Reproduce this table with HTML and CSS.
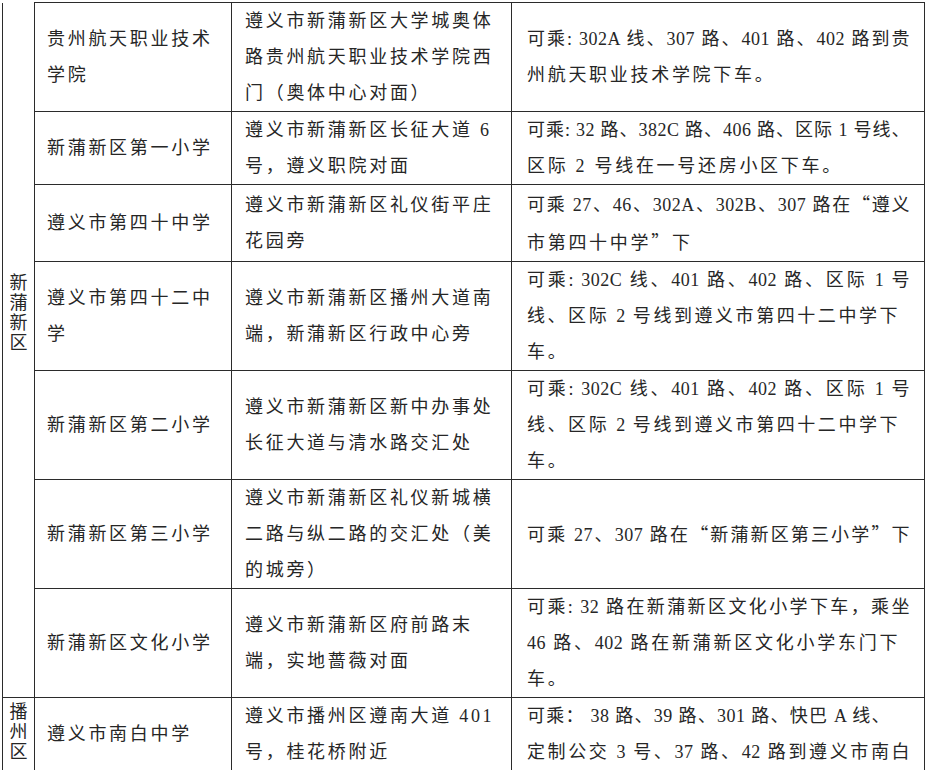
FILE: index.html
```html
<!DOCTYPE html>
<html lang="zh-CN">
<head>
<meta charset="utf-8">
<title>学校公交线路</title>
<link rel="stylesheet" href="styles.css">
</head>
<body>
<div class="page">
<table class="grid">
<colgroup>
<col class="c-region"><col class="c-name"><col class="c-addr"><col class="c-bus">
</colgroup>
<tbody>
<tr>
<td class="region cont" rowspan="7"><span class="region-text">新蒲新区</span></td>
<td class="name">贵州航天职业技术<br>学院</td>
<td class="addr">遵义市新蒲新区大学城奥体<br>路贵州航天职业技术学院西<br>门（奥体中心对面）</td>
<td class="bus"><span class="l j">可乘: 302A 线、307 路、401 路、402 路到贵</span><span class="l">州航天职业技术学院下车。</span></td>
</tr>
<tr>
<td class="name">新蒲新区第一小学</td>
<td class="addr">遵义市新蒲新区长征大道 6<br>号，遵义职院对面</td>
<td class="bus"><span class="l j">可乘: 32 路、382C 路、406 路、区际 1 号线、</span><span class="l">区际 2 号线在一号还房小区下车。</span></td>
</tr>
<tr>
<td class="name">遵义市第四十中学</td>
<td class="addr">遵义市新蒲新区礼仪街平庄<br>花园旁</td>
<td class="bus"><span class="l j">可乘 27、46、302A、302B、307 路在<span class="q">“</span>遵义</span><span class="l">市第四十中学<span class="q">”</span>下</span></td>
</tr>
<tr>
<td class="name">遵义市第四十二中<br>学</td>
<td class="addr">遵义市新蒲新区播州大道南<br>端，新蒲新区行政中心旁</td>
<td class="bus"><span class="l j">可乘: 302C 线、401 路、402 路、区际 1 号</span><span class="l j n">线、区际 2 号线到遵义市第四十二中学下</span><span class="l">车。</span></td>
</tr>
<tr>
<td class="name">新蒲新区第二小学</td>
<td class="addr">遵义市新蒲新区新中办事处<br>长征大道与清水路交汇处</td>
<td class="bus"><span class="l j">可乘: 302C 线、401 路、402 路、区际 1 号</span><span class="l j n">线、区际 2 号线到遵义市第四十二中学下</span><span class="l">车。</span></td>
</tr>
<tr>
<td class="name">新蒲新区第三小学</td>
<td class="addr">遵义市新蒲新区礼仪新城横<br>二路与纵二路的交汇处（美<br>的城旁）</td>
<td class="bus"><span class="l j">可乘 27、307 路在<span class="q">“</span>新蒲新区第三小学<span class="q">”</span>下</span></td>
</tr>
<tr>
<td class="name">新蒲新区文化小学</td>
<td class="addr">遵义市新蒲新区府前路末<br>端，实地蔷薇对面</td>
<td class="bus"><span class="l j">可乘: 32 路在新蒲新区文化小学下车，乘坐</span><span class="l j n">46 路、402 路在新蒲新区文化小学东门下</span><span class="l">车。</span></td>
</tr>
<tr>
<td class="region first"><span class="region-text">播州区</span></td>
<td class="name">遵义市南白中学</td>
<td class="addr">遵义市播州区遵南大道 401<br>号，桂花桥附近</td>
<td class="bus"><span class="l j m">可乘： 38 路、39 路、301 路、快巴 A 线、</span><span class="l j">定制公交 3 号、37 路、42 路到遵义市南白</span></td>
</tr>
</tbody>
</table>
</div>
</body>
</html>
```
FILE: styles.css
```css
html, body {
  margin: 0;
  background: #ffffff;
}

body {
  width: 926px;
  height: 770px;
  overflow: hidden;
}

.page {
  padding: 2px 0 0 2px;
}

.grid {
  border-collapse: collapse;
  table-layout: fixed;
  width: 922px;
  font-family: "Liberation Serif", "Noto Sans CJK SC", serif;
  font-size: 18px;
  line-height: 36px;
  color: #262626;
}

.c-region { width: 32px; }
.c-name { width: 197px; }
.c-addr { width: 280px; }
.c-bus { width: 413px; }

.grid td {
  border: 1px solid #2b2b2b;
  padding: 0;
  vertical-align: middle;
  letter-spacing: 2.7px;
  white-space: nowrap;
}

.grid td.region {
  vertical-align: top;
  text-align: center;
  letter-spacing: 0;
  line-height: 20px;
  font-family: "Noto Sans CJK SC", sans-serif;
  white-space: normal;
}

.grid td.region.cont {
  border-top: none;
  padding-top: 268px;
}

.grid td.region.first {
  padding-top: 2px;
}

.region-text {
  display: block;
  width: 20px;
  margin: 0 auto;
}

.grid td.name {
  padding-left: 12px;
}

.grid td.addr {
  padding-left: 13px;
}

.grid td.bus {
  padding: 0 14px 0 15px;
  white-space: normal;
}

.l {
  display: block;
  white-space: nowrap;
  letter-spacing: 2.7px;
}

.j {
  letter-spacing: 0.5px;
  text-align: justify;
  text-align-last: justify;
}

.n {
  margin-right: 12px;
}

.m {
  margin-right: 20px;
}

.q {
  font-family: "Noto Sans CJK SC", sans-serif;
}
```
